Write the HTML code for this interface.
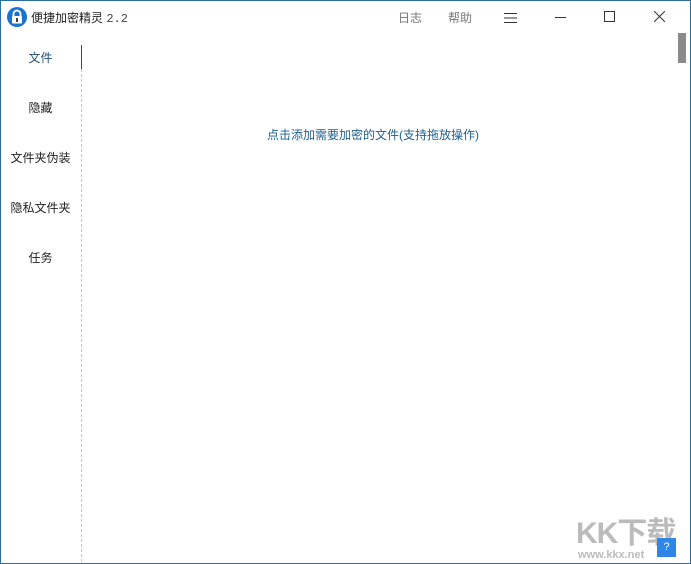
<!DOCTYPE html><html><head><meta charset="utf-8"><style>
body{margin:0;width:691px;height:564px;overflow:hidden;background:#fff;font-family:"Liberation Sans","Noto Sans CJK SC",sans-serif;position:relative}
.frame{position:absolute;left:0;top:0;width:689px;height:562px;border:1px solid #2a6ea6}
.t{position:absolute;font-size:12px;white-space:nowrap}
.nav{position:absolute;left:0;width:81px;text-align:center;font-size:12px;color:#222}
</style></head><body>
<div class="frame"></div>
<svg style="position:absolute;left:7px;top:7px" width="20" height="20" viewBox="0 0 20 20"><circle cx="10" cy="10" r="10" fill="#1a73d0"/><path d="M6.5 9V7a3.5 3.5 0 0 1 7 0v2" stroke="#fff" stroke-width="1.8" fill="none"/><rect x="5" y="9" width="10" height="7.5" rx="1" fill="#fff"/><rect x="9.2" y="11" width="1.6" height="4" fill="#111"/></svg>
<div class="t" style="left:31px;top:9px;color:#222">便捷加密精灵 <span style="color:#444;font-family:'Liberation Mono',monospace;font-size:12px">2.2</span></div>
<div class="t" style="left:398px;top:9px;color:#777">日志</div>
<div class="t" style="left:448px;top:9px;color:#777">帮助</div>
<svg style="position:absolute;left:504px;top:12px" width="14" height="12"><path d="M0 1.5h13M0 6h13M0 10.5h13" stroke="#333" stroke-width="1"/></svg>
<div style="position:absolute;left:555px;top:17px;width:11px;height:1px;background:#333"></div>
<div style="position:absolute;left:604px;top:11px;width:9px;height:9px;border:1px solid #333"></div>
<svg style="position:absolute;left:654px;top:11px" width="11" height="11"><path d="M0 0L11 11M11 0L0 11" stroke="#333" stroke-width="1"/></svg>
<div style="position:absolute;left:678px;top:33px;width:8px;height:30px;background:#8a8a8a"></div>
<div style="position:absolute;left:81px;top:45px;width:1px;height:24px;background:#1f4f7a"></div>
<div style="position:absolute;left:81px;top:69px;width:0;height:493px;border-left:1px dashed #c8c8c8"></div>
<div class="nav" style="top:49px;color:#1f4f7a">文件</div>
<div class="nav" style="top:99px">隐藏</div>
<div class="nav" style="top:149px">文件夹伪装</div>
<div class="nav" style="top:199px">隐私文件夹</div>
<div class="nav" style="top:249px">任务</div>
<div class="t" style="left:267px;top:126px;color:#1f5f8f">点击添加需要加密的文件(支持拖放操作)</div>
<div class="t" style="left:576px;top:508px;font-size:30px;font-weight:bold;color:#bbb;letter-spacing:-1px">KK下载</div>
<div class="t" style="left:578px;top:549px;font-size:11px;font-weight:bold;color:#bbb">www.kkx.net</div>
<div style="position:absolute;left:657px;top:538px;width:19px;height:19px;background:#2f86e6;color:#fff;font-size:11px;text-align:center;line-height:19px">?</div>
</body></html>
